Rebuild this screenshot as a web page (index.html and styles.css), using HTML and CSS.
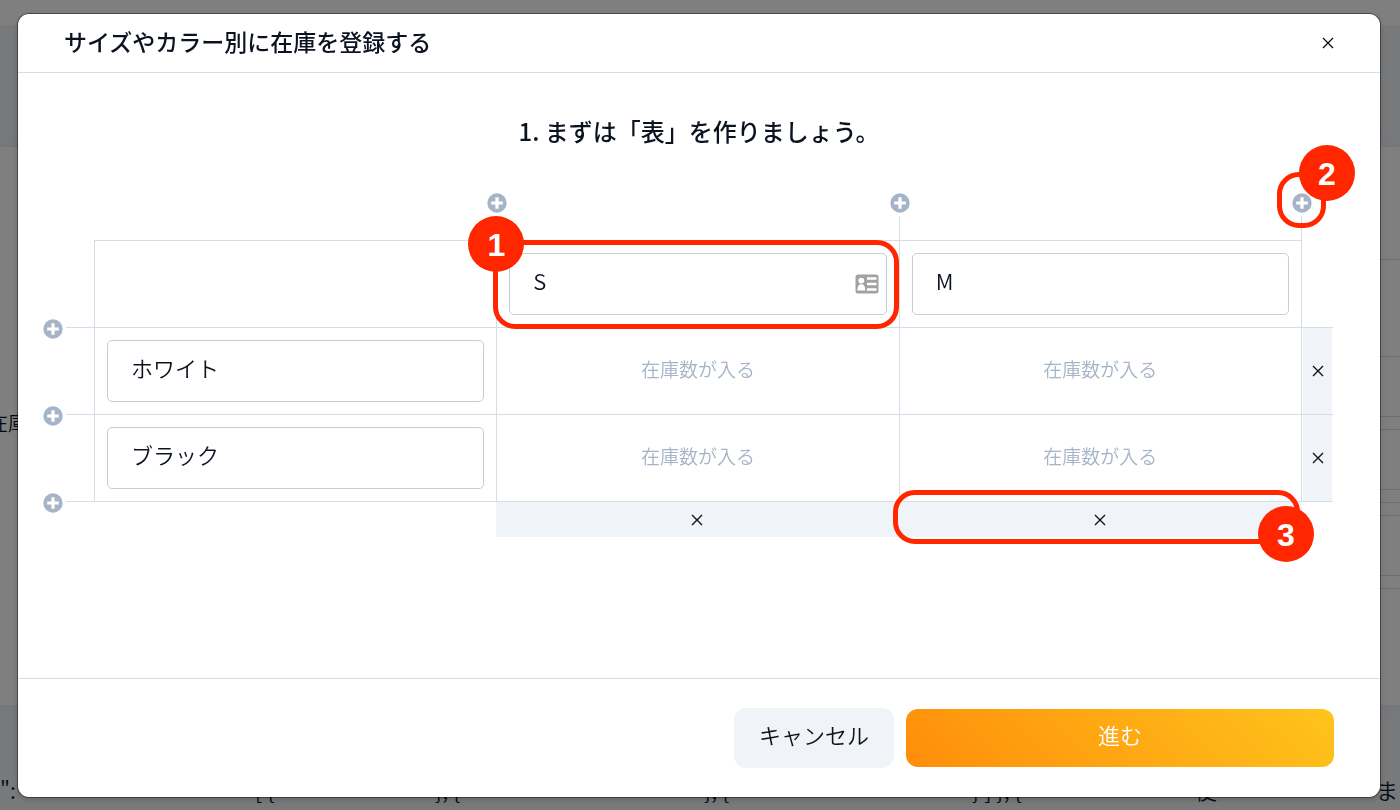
FILE: index.html
```html
<!DOCTYPE html>
<html lang="ja">
<head>
  <meta charset="utf-8">
  <title>サイズやカラー別に在庫を登録する</title>
  <link rel="stylesheet" href="styles.css">
</head>
<body>
  <svg class="symbols" aria-hidden="true">
    <symbol id="icon-plus" viewBox="0 0 20 20">
      <circle cx="10" cy="10" r="9.7" fill="#a6b4c8"/>
      <path d="M10 4.2v11.6M4.2 10h11.6" stroke="#fff" stroke-width="3.2"/>
    </symbol>
    <symbol id="icon-close" viewBox="0 0 12 12">
      <path d="M1 1l10 10M11 1L1 11" stroke="#0b1320" stroke-width="1.4"/>
    </symbol>
    <symbol id="icon-card" viewBox="0 0 24 20">
      <rect x="0.5" y="0.5" width="23" height="19" rx="2.5" fill="#a2a2a2"/>
      <circle cx="6.3" cy="6.600" r="2.9" fill="#fff"/>
      <path d="M2.3 16.5c0-3.6 1.200-5.600 2.700-6.300h2.600c1.500.7 2.700 2.700 2.700 6.300z" fill="#fff"/>
      <path d="M12 4.500h9.500M12 10h9.500M12 15.500h9.500" stroke="#fff" stroke-width="2.400"/>
    </symbol>
  </svg>

  <!-- 背面のページ -->
  <div class="page">
    <div class="page-top"></div>
    <div class="page-band"></div>
    <div class="page-card">
      <p class="page-label">在庫</p>
      <div class="page-fields">
        <div class="field-lg"></div>
        <div class="field-md"></div>
        <div class="field-sm"></div>
        <div class="field-gap"></div>
        <div class="field-sm"></div>
        <div class="field-gap"></div>
        <div class="field-gap"></div>
        <div class="field-sm"></div>
        <div class="field-gap"></div>
      </div>
    </div>
    <div class="page-code">
      <span>":</span><span>[ {</span><span>}, {</span><span>}, {</span><span>} ] }, {</span><span>使</span><span>ます</span>
    </div>
  </div>

  <div class="overlay">
    <div class="modal" role="dialog" aria-labelledby="modal-title">
      <div class="modal-header">
        <h1 id="modal-title">サイズやカラー別に在庫を登録する</h1>
        <button type="button" class="btn-icon" aria-label="閉じる"><svg class="icon-close"><use href="#icon-close"/></svg></button>
      </div>

      <div class="modal-body">
        <h2>1. まずは「表」を作りましょう。</h2>
        <div class="table-wrap">
          <table class="stock-table">
            <colgroup>
              <col class="col-add">
              <col>
              <col>
              <col>
              <col class="col-delete">
            </colgroup>
            <tr class="row-add">
              <td></td>
              <td></td>
              <td class="stub"><button type="button" class="btn-add" aria-label="列を追加"><svg><use href="#icon-plus"/></svg></button></td>
              <td class="stub"><button type="button" class="btn-add" aria-label="列を追加"><svg><use href="#icon-plus"/></svg></button></td>
              <td class="stub">
                <button type="button" class="btn-add" aria-label="列を追加"><svg><use href="#icon-plus"/></svg></button>
                <div class="callout callout-2"><span class="badge">2</span></div>
              </td>
            </tr>
            <tr class="row-head">
              <td></td>
              <td class="cell"></td>
              <td class="cell">
                <input type="text" class="input" value="S" aria-label="サイズ1">
                <svg class="icon-card"><use href="#icon-card"/></svg>
                <div class="callout callout-1"><span class="badge">1</span></div>
              </td>
              <td class="cell"><input type="text" class="input" value="M" aria-label="サイズ2"></td>
              <td class="cell-end"></td>
            </tr>
            <tr class="row-item">
              <td class="side"><button type="button" class="btn-add" aria-label="行を追加"><svg><use href="#icon-plus"/></svg></button></td>
              <td class="cell"><input type="text" class="input" value="ホワイト" aria-label="カラー1"></td>
              <td class="cell cell-stock">在庫数が入る</td>
              <td class="cell cell-stock">在庫数が入る</td>
              <td class="cell cell-delete"><button type="button" class="btn-delete" aria-label="行を削除"><svg class="icon-close"><use href="#icon-close"/></svg></button></td>
            </tr>
            <tr class="row-item">
              <td class="side"><button type="button" class="btn-add" aria-label="行を追加"><svg><use href="#icon-plus"/></svg></button></td>
              <td class="cell"><input type="text" class="input" value="ブラック" aria-label="カラー2"></td>
              <td class="cell cell-stock">在庫数が入る</td>
              <td class="cell cell-stock">在庫数が入る</td>
              <td class="cell cell-delete"><button type="button" class="btn-delete" aria-label="行を削除"><svg class="icon-close"><use href="#icon-close"/></svg></button></td>
            </tr>
            <tr class="row-delete">
              <td class="side"><button type="button" class="btn-add" aria-label="行を追加"><svg><use href="#icon-plus"/></svg></button></td>
              <td class="foot"></td>
              <td class="foot"><button type="button" class="btn-delete" aria-label="列を削除"><svg class="icon-close"><use href="#icon-close"/></svg></button></td>
              <td class="foot">
                <button type="button" class="btn-delete" aria-label="列を削除"><svg class="icon-close"><use href="#icon-close"/></svg></button>
                <div class="callout callout-3"><span class="badge">3</span></div>
              </td>
              <td class="foot"></td>
            </tr>
          </table>
        </div>
      </div>

      <div class="modal-footer">
        <button type="button" class="btn btn-cancel">キャンセル</button>
        <button type="button" class="btn btn-next">進む</button>
      </div>
    </div>
  </div>
</body>
</html>
```

FILE: styles.css
```css
* {
  box-sizing: border-box;
}

body {
  margin: 0;
  height: 100vh;
  overflow: hidden;
  font-family: "Noto Sans CJK JP", sans-serif;
  font-weight: 350;
  color: #0b1320;
}

button {
  padding: 0;
  border: none;
  background: none;
  font: inherit;
  color: inherit;
  cursor: pointer;
}

svg {
  display: block;
}

.symbols {
  display: none;
}

/* 背面のページ */
.page {
  display: flex;
  flex-direction: column;
  height: 100vh;
  background-color: #eff2f7;
}

.page-top {
  height: 25px;
  background-color: #fff;
}

.page-band {
  height: 122px;
}

.page-card {
  display: flex;
  height: 558px;
  background-color: #fff;
  box-shadow: 0 0 20px rgba(0, 0, 0, 0.05);
}

.page-label {
  align-self: center;
  width: 40%;
  margin: 0 0 8px -12px;
  font-size: 20px;
}

.page-fields {
  flex: 1;
}

.page-fields div {
  border-bottom: 1px solid #d3dae6;
}

.page-fields .field-lg {
  height: 113px;
}

.page-fields .field-md {
  height: 97px;
}

.page-fields .field-sm {
  height: 60px;
}

.page-fields .field-gap {
  height: 13px;
}

.page-code {
  flex: 1;
  display: grid;
  grid-template-columns: 255fr 180fr 269fr 268fr 223fr 181fr 44fr;
  align-items: end;
  margin-right: -20px;
  padding-bottom: 6px;
  font-size: 22px;
  line-height: 30px;
  white-space: nowrap;
}

/* モーダル */
.overlay {
  position: fixed;
  inset: 0;
  display: flex;
  padding: 14px 20px 13px 18px;
  background-color: rgba(0, 0, 0, 0.5);
}

.modal {
  flex: 1;
  display: flex;
  flex-direction: column;
  background-color: #fff;
  border-radius: 11px;
  box-shadow: 0 0 0 1px rgba(0, 0, 0, 0.4), 0 2px 6px rgba(0, 0, 0, 0.2);
}

.modal-header {
  display: flex;
  justify-content: space-between;
  align-items: center;
  height: 59px;
  padding: 0 46px;
  border-bottom: 1px solid #d5dde6;
}

h1 {
  margin: 0;
  padding-bottom: 4px;
  font-size: 23px;
  font-weight: 500;
}

.icon-close {
  width: 12px;
  height: 12px;
}

.modal-body {
  flex: 1;
  padding: 38px 47px 0;
}

h2 {
  margin: 0 0 42px;
  font-size: 24px;
  font-weight: 500;
  line-height: 40px;
  text-align: center;
}

.table-wrap {
  margin-left: -23px;
}

.stock-table {
  width: 100%;
  table-layout: fixed;
  border-collapse: separate;
  border-spacing: 0;
}

.stock-table td {
  position: relative;
  padding: 0;
}

.col-add {
  width: 52px;
}

.col-delete {
  width: 32px;
}

.row-add {
  height: 47px;
}

.row-head,
.row-item {
  height: 87px;
}

.row-delete {
  height: 36px;
}

/* 追加ボタンから表までの線 */
.stub::after {
  content: "";
  position: absolute;
  left: 0;
  bottom: 0;
  width: 1px;
  height: 24px;
  background-color: #d5dde8;
}

.side::after {
  content: "";
  position: absolute;
  top: 0;
  right: 0;
  width: 28px;
  height: 1px;
  background-color: #d5dde8;
}

.btn-add,
.btn-add svg {
  width: 20px;
  height: 20px;
}

.btn-add {
  position: absolute;
}

.stub .btn-add {
  top: 0;
  left: -9px;
}

.side .btn-add {
  top: -8px;
  left: 1px;
}

.stock-table .cell {
  padding: 12px;
  border-top: 1px solid #d5dde8;
  border-left: 1px solid #d5dde8;
}

.stock-table .cell-end {
  border-left: 1px solid #d5dde8;
}

.stock-table .foot {
  border-top: 1px solid #d5dde8;
}

.input {
  display: block;
  width: 100%;
  height: 62px;
  padding: 0 23px 8px;
  border: 1px solid #c8ced6;
  border-radius: 5px;
  outline: none;
  background-color: #fff;
  font: inherit;
  font-size: 22px;
  color: inherit;
}

.icon-card {
  position: absolute;
  top: 33px;
  right: 20px;
  width: 24px;
  height: 20px;
}

.stock-table .cell-stock {
  padding-bottom: 18px;
  font-size: 19px;
  text-align: center;
  color: #a6b4c8;
}

.stock-table .cell-delete {
  padding: 0 1px;
}

.btn-delete {
  display: flex;
  justify-content: center;
  align-items: center;
  width: 100%;
  background-color: #f0f4f9;
}

.cell-delete .btn-delete {
  height: 86px;
}

.foot .btn-delete {
  height: 35px;
}

.modal-footer {
  display: flex;
  justify-content: flex-end;
  align-items: center;
  gap: 12px;
  height: 119px;
  padding: 0 46px;
  border-top: 1px solid #d5dde6;
}

.btn {
  height: 60px;
  padding-bottom: 8px;
  border-radius: 12px;
  font-size: 22px;
}

.btn-cancel {
  width: 160px;
  background-color: #f0f4f9;
}

.btn-next {
  width: 428px;
  height: 58px;
  background: linear-gradient(45deg, #ff8d0a, #fec41c);
  color: #fff;
}

/* 説明用の赤枠と番号 */
.callout {
  position: absolute;
  z-index: 1;
  border: 5px solid #ff2600;
  border-radius: 22px;
  pointer-events: none;
}

.badge {
  position: absolute;
  width: 56px;
  height: 56px;
  border-radius: 50%;
  background-color: #ff2600;
  font-family: "Liberation Sans", Arial, sans-serif;
  font-size: 32px;
  font-weight: bold;
  line-height: 58px;
  text-align: center;
  color: #fff;
}

.callout-1 {
  inset: -1px 0 -2px -4px;
}

.callout-1 .badge {
  top: -29px;
  left: -30px;
}

.callout-2 {
  top: -21px;
  left: -24px;
  width: 49px;
  height: 56px;
}

.callout-2 .badge {
  top: -32px;
  left: 17px;
}

.callout-3 {
  inset: -12px 1px -7px -6px;
}

.callout-3 .badge {
  right: -19px;
  bottom: -23px;
}
```
